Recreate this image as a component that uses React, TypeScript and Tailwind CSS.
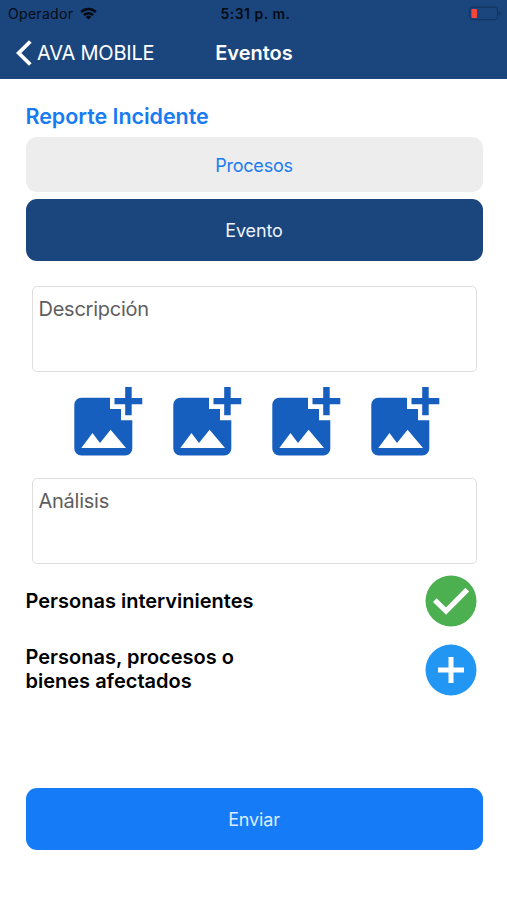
import React from "react";

function WifiIcon() {
  return (
    <svg className="ml-[7px] h-[13px] w-[17px]" viewBox="0 0 17 13" fill="none" stroke="#050b16" strokeWidth="2.5">
      <path d="M1.2 5a10.3 10.3 0 0 1 14.6 0" />
      <path d="M3.9 8.1a6.5 6.5 0 0 1 9.2 0" />
      <path d="M8.5 12.6 5.8 9.9a3.8 3.8 0 0 1 5.4 0z" fill="#050b16" stroke="none" />
    </svg>
  );
}

function BatteryIcon() {
  return (
    <svg className="h-[15px] w-[33px]" viewBox="0 0 33 15" fill="none">
      <rect x="1.6" y="1.2" width="28" height="12.4" rx="3.4" stroke="#153660" strokeWidth="1.3" />
      <path d="M31 5.200c2.100.6 2.100 3.800 0 4.400z" fill="#153660" />
      <rect x="3.400" y="3" width="5.600" height="9" rx="1" fill="#f7473d" />
    </svg>
  );
}

function AddPhotoIcon() {
  return (
    <svg className="h-[69px] w-[69px]" viewBox="0 0 69 69" fill="#175fbe">
      <path
        fillRule="evenodd"
        d="M7.300 10.700H36V22h11v11.300h11.300v28.200a7 7 0 0 1-7 7h-44a7 7 0 0 1-7-7V17.700a7 7 0 0 1 7-7zM7.300 61H52L36.600 42.700 26 56l-7.500-10z"
      />
      <path d="M51.200 0h6.500v11h10.600v6.300H57.700v10.900h-6.500V17.300H40.500V11h10.700z" />
    </svg>
  );
}

function CheckCircle() {
  return (
    <svg className="size-[52px]" viewBox="0 0 52 52" fill="none">
      <circle cx="26" cy="26" r="25.500" fill="#4caf50" />
      <path d="M9.800 25.200 21 36.100 42.300 14.700" stroke="#fff" strokeWidth="5.200" />
    </svg>
  );
}

function PlusCircle() {
  return (
    <svg className="size-[52px]" viewBox="0 0 52 52" fill="none">
      <circle cx="26" cy="26" r="25.500" fill="#2196f3" />
      <path d="M13 26h26M26 13v26" stroke="#fff" strokeWidth="5" />
    </svg>
  );
}

export default function App() {
  return (
    <div className="flex h-[900px] w-[507px] flex-col overflow-hidden bg-white font-['Inter','Liberation_Sans',sans-serif]">
      <header className="h-[79px] bg-[#1b457d]">
        <div className="grid h-[27px] grid-cols-3 items-center pr-[6px] pl-[8px] text-[#050b16]">
          <div className="flex items-center text-[14px] tracking-[0.3px]">
            Operador
            <WifiIcon />
          </div>
          <div className="pl-[2px] text-center text-[14px] font-semibold tracking-[0.5px] whitespace-nowrap">5:31 p. m.</div>
          <div className="flex justify-end">
            <BatteryIcon />
          </div>
        </div>
        <div className="grid h-[52px] grid-cols-[1fr_auto_1fr] items-center px-[16px] text-white">
          <button className="flex items-center text-[20px] tracking-[-0.2px] whitespace-nowrap">
            <svg className="mr-[5px] h-[26px] w-[16px]" viewBox="0 0 16 26" fill="none" stroke="#fff" strokeWidth="3.800">
              <path d="M14.300 1.500 2.700 13l11.600 11.500" />
            </svg>
            AVA MOBILE
          </button>
          <h1 className="-mt-px pl-px text-[20px] font-semibold">Eventos</h1>
        </div>
      </header>
      <main className="flex flex-col pr-[24.500px] pl-[25.500px]">
        <h2 className="mt-[23px] h-[28px] text-[21.500px] leading-[28px] font-semibold tracking-[-0.050px] text-[#187bf2]">Reporte Incidente</h2>
        <button className="mt-[7px] h-[55px] rounded-[11px] bg-[#ededed] pt-[2px] text-[18px] tracking-[-0.200px] text-[#187bf2]">Procesos</button>
        <button className="mt-[7px] h-[62px] rounded-[11px] bg-[#1b457d] text-[18px] tracking-[-0.150px] text-[#edf3fc]">Evento</button>
        <div className="mx-[6px] mt-[25px] h-[86px] rounded-[5px] border-[1.500px] border-[#dedede] px-[6px] pt-[8px] text-[20px] leading-[28px] tracking-[-0.250px] text-[#5e5e5e]">
          Descripción
        </div>
        <div className="mt-[15px] flex gap-[30px] pl-[48.500px]">
          <AddPhotoIcon />
          <AddPhotoIcon />
          <AddPhotoIcon />
          <AddPhotoIcon />
        </div>
        <div className="mx-[6px] mt-[22px] h-[86px] rounded-[5px] border-[1.500px] border-[#dedede] px-[6px] pt-[8px] text-[20px] leading-[28px] tracking-[-0.250px] text-[#5e5e5e]">
          Análisis
        </div>
        <div className="mt-[11px] flex h-[52px] items-center justify-between pr-[5.500px] text-[20px] font-semibold text-black">
          <span>Personas intervinientes</span>
          <CheckCircle />
        </div>
        <div className="mt-[17px] flex h-[52px] items-center justify-between pr-[5.500px] text-[20px] leading-[24px] font-semibold text-black">
          <span className="pb-[2px]">
            Personas, procesos o<br />
            bienes afectados
          </span>
          <PlusCircle />
        </div>
        <button className="mt-[92px] h-[62px] rounded-[11px] bg-[#167bf7] text-[18px] tracking-[-0.150px] text-[#dcecff]">Enviar</button>
      </main>
    </div>
  );
}
